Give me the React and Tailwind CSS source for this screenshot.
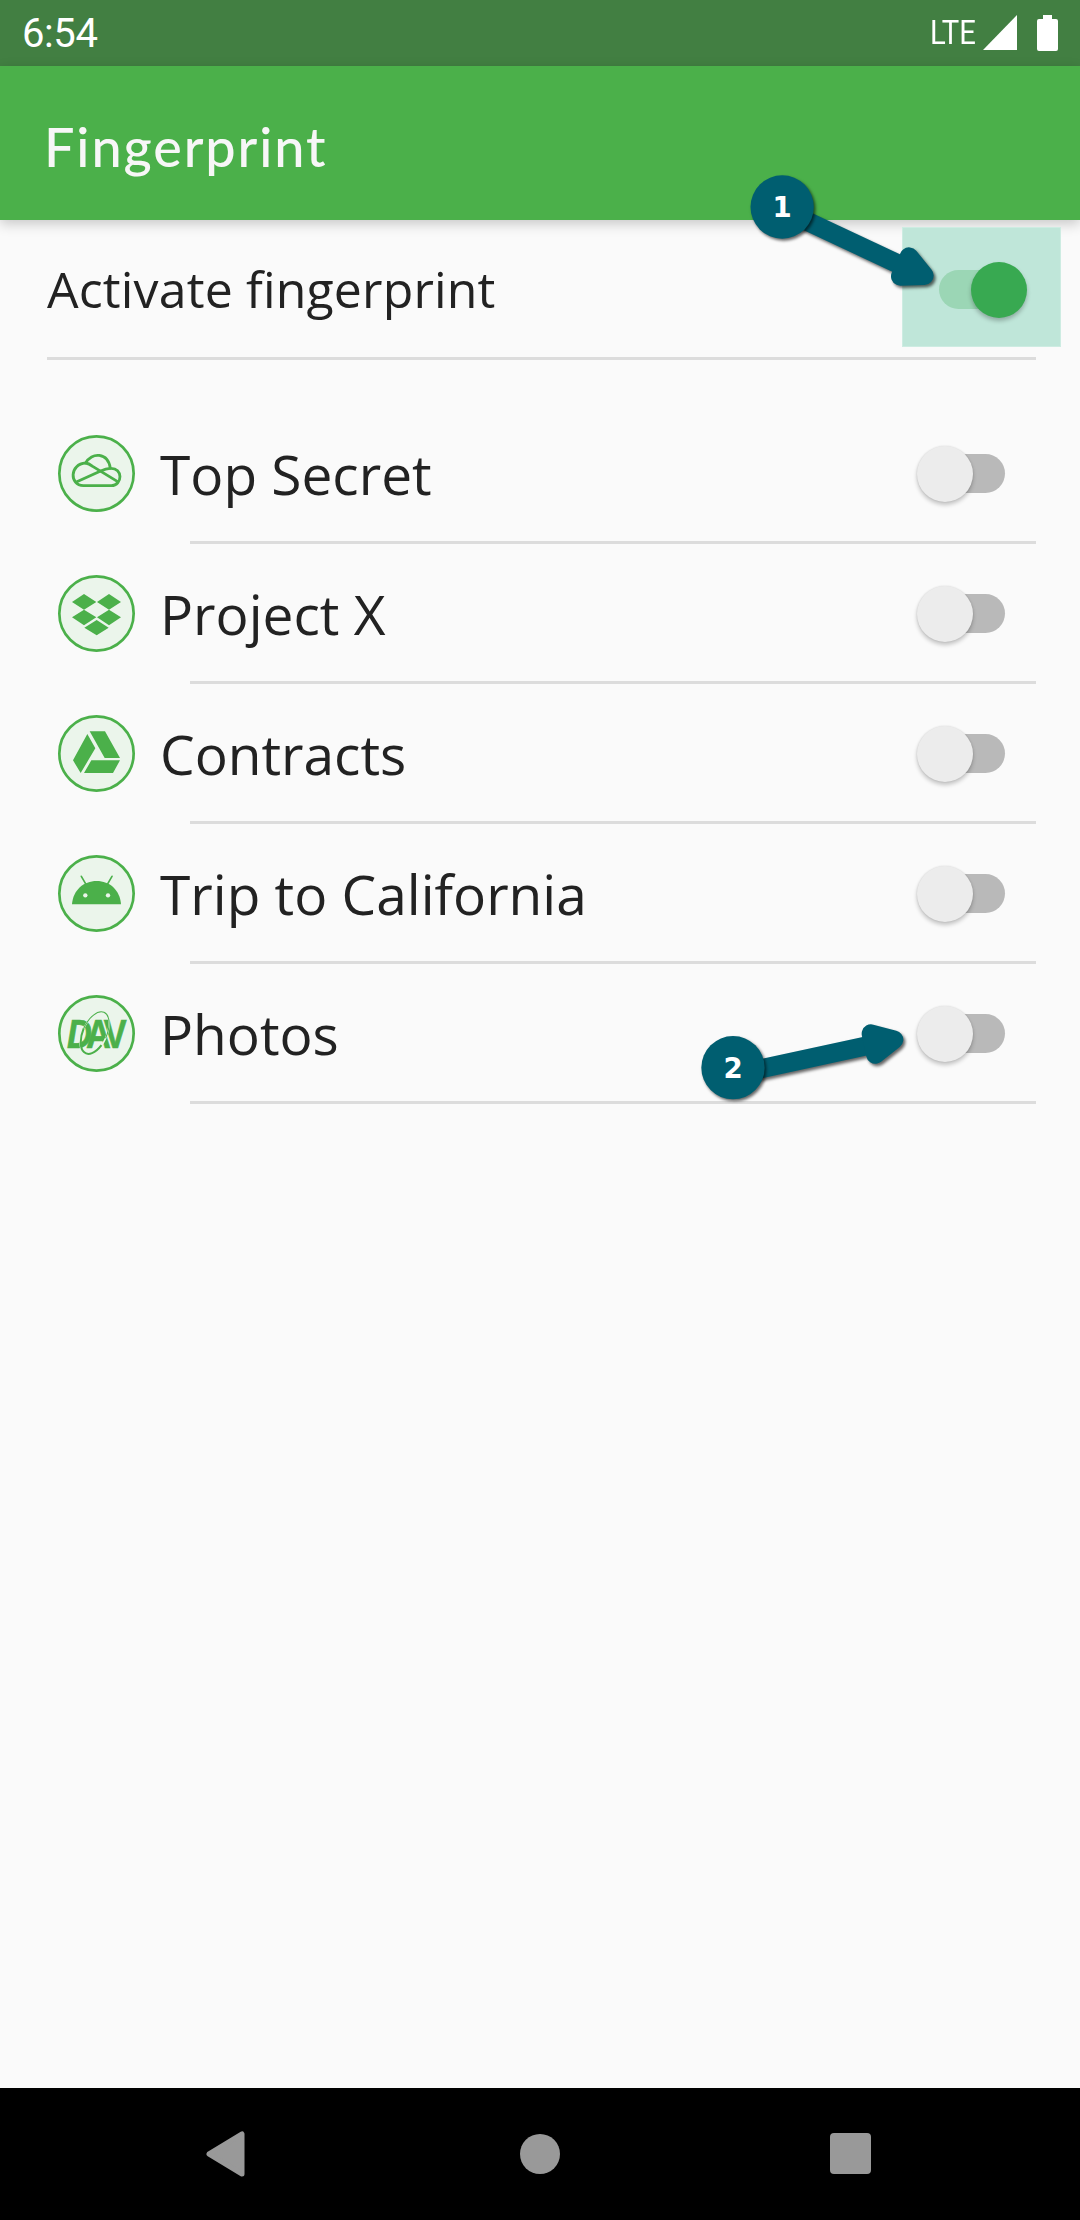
import React from "react";

const GREEN = "#4bb04a";

function CloudIcon() {
  return (
    <g fill="none" stroke={GREEN} strokeWidth="8.5" strokeLinejoin="round" strokeLinecap="round">
      <path d="M130 197C88 196 88 132 137 129C154 96 204 96 211 145C250 143 248 196 214 197Z" />
      <path d="M109 186L182 153Q198 145 211 145" />
      <path d="M137 129Q146 130 158 139L233 185" />
    </g>
  );
}

function DropboxIcon() {
  return (
    <path
      fill={GREEN}
      d="M132 102L169 126L132 149L96 126ZM207 102L243 126L207 149L171 126ZM132 149L169 172L132 196L96 172ZM207 149L243 172L207 196L171 172ZM170 180L206 203L170 226L133 203Z"
    />
  );
}

function DriveIcon() {
  return (
    <path
      fill={GREEN}
      d="M142 102L166 145L122 219L99 181ZM149 94H195L240 174H194ZM154 181H240L219 219H132Z"
    />
  );
}

function AndroidIcon() {
  return (
    <g>
      <path fill={GREEN} d="M96 193C99 150 131 123 170 123S240 150 243 193Z" />
      <path d="M124 109L138 133M216 109L202 133" stroke={GREEN} strokeWidth="5" strokeLinecap="round" />
      <circle cx="136" cy="166" r="6.5" fill="#ebf5eb" />
      <circle cx="204" cy="166" r="6.5" fill="#ebf5eb" />
    </g>
  );
}

function DavIcon() {
  return (
    <g>
      <text
        transform="translate(81 203) scale(.86 1)"
        fill={GREEN}
        stroke={GREEN}
        strokeWidth="2"
        fontFamily="Liberation Sans"
        fontWeight="700"
        fontSize="120"
      >
        <tspan fontStyle="italic">D</tspan>
        <tspan dx="-20">A</tspan>
        <tspan dx="-25">V</tspan>
      </text>
      <g fill="none" transform="rotate(24 164 160)">
        <ellipse cx="164" cy="160" rx="36" ry="69" stroke="#ebf5eb" strokeWidth="5" />
        <path d="M200 160A36 69 0 1 0 128 160" stroke={GREEN} strokeWidth="3" />
        <path d="M128 160A36 69 0 0 0 197 184" stroke={GREEN} strokeWidth="6" />
      </g>
    </g>
  );
}

const items = [
  { name: "Top Secret", Icon: CloudIcon },
  { name: "Project X", Icon: DropboxIcon },
  { name: "Contracts", Icon: DriveIcon },
  { name: "Trip to California", Icon: AndroidIcon },
  { name: "Photos", Icon: DavIcon },
];

function StatusBar() {
  return (
    <header className="flex h-[66px] justify-between bg-[#427f42] pl-[22px] pr-[22px] text-white">
      <span className="pt-[10px] font-['Roboto'] text-[40px] leading-[48px] tracking-[-0.4px]">6:54</span>
      <div className="flex items-start">
        <span className="mt-[12px] w-[53px] origin-left scale-x-[0.86] font-['Roboto'] text-[34px] leading-10">LTE</span>
        <svg className="mt-[15px] h-[35px] w-[34px]" viewBox="0 0 34 35">
          <path fill="#fff" d="M34 0V35H0Z" />
        </svg>
        <svg className="ml-5 mt-[15px] h-9 w-[21px]" viewBox="0 0 21 36">
          <path fill="#fff" d="M6 0H15V4H19Q21 4 21 6V34Q21 36 19 36H2Q0 36 0 34V6Q0 4 2 4H6Z" />
        </svg>
      </div>
    </header>
  );
}

function SwitchOff() {
  return (
    <span className="mr-[31px] flex h-[39px] w-[73px] items-center rounded-full bg-[#b9b9b9]">
      <span className="-ml-[15px] size-[56px] shrink-0 rounded-full bg-[#ececec] shadow-[0_3px_4px_rgba(0,0,0,0.22),0_0_2px_rgba(0,0,0,0.12)]" />
    </span>
  );
}

function Step({ label, className, viewBox, cx, cy, shaft, head }) {
  return (
    <svg className={className} viewBox={viewBox}>
      <g className="drop-shadow-[6px_7px_5px_rgba(0,0,0,0.6)]" fill="#005e70" stroke="#005e70" strokeLinejoin="round">
        <path d={shaft} strokeWidth="57" />
        <path d={head} strokeWidth="56" />
      </g>
      <circle className="drop-shadow-[5px_6px_5px_rgba(0,0,0,0.6)]" cx={cx} cy={cy} r="95" fill="#005e70" />
      <text x={cx} y={cy + 31} textAnchor="middle" fill="#fff" fontFamily="DejaVu Sans" fontWeight="700" fontSize="83">
        {label}
      </text>
    </svg>
  );
}

export default function App() {
  return (
    <div className="relative flex h-[2220px] w-[1080px] flex-col overflow-hidden bg-[#fafafa] font-['Open_Sans',sans-serif] text-[#222]">
      <StatusBar />
      <div className="h-[154px] bg-[#4bb04a] pl-[44px] pt-[48px] shadow-[0_4px_12px_rgba(0,0,0,0.2)]">
        <h1 className="font-['Lato',sans-serif] text-[54px] font-medium leading-[66px] tracking-[1.9px] text-[#f7f7f7]">Fingerprint</h1>
      </div>

      <main className="flex-1">
        <section className="ml-[47px] mr-[44px] flex h-[140px] items-center justify-between border-b-[3px] border-[#dcdcdc]">
          <span className="text-[50px] leading-[68px] tracking-[0.15px]">Activate fingerprint</span>
          <span className="relative z-10 -mr-[25px] mt-[-3px] flex h-[120px] w-[159px] items-center border border-[#cdece2] bg-[#bfe6d9] pl-[36px] pt-[5px]">
            <span className="flex h-[39px] w-[73px] items-center justify-end rounded-full bg-[#9bd6b5]">
              <span className="-mr-[15px] size-[56px] shrink-0 rounded-full bg-[#38a951] shadow-[0_3px_4px_rgba(0,0,0,0.25)]" />
            </span>
          </span>
        </section>

        <ul className="pt-[44px]">
          {items.map(({ name, Icon }) => (
            <li key={name} className="mr-[44px] h-[140px]">
              <div className="flex h-[137px] items-center pl-[58px] pt-[2px]">
                <span className="flex size-[77px] rounded-full bg-[#ebf5eb]">
                  <svg className="size-[77px]" viewBox="54 45 231 231">
                    <circle cx="169.5" cy="160.5" r="111.5" fill="none" stroke={GREEN} strokeWidth="8" />
                    <Icon />
                  </svg>
                </span>
                <span className="ml-[25px] flex-1 text-[55px] leading-[75px]">{name}</span>
                <SwitchOff />
              </div>
              <div className="ml-[190px] h-[3px] bg-[#dcdcdc]" />
            </li>
          ))}
        </ul>
      </main>

      <nav className="flex h-[132px] items-center bg-black pb-[1px]">
        <svg className="ml-[206px] h-[46px] w-[39px]" viewBox="0 0 39 46">
          <path d="M36 3V43L3 23Z" fill="#999" stroke="#999" strokeWidth="5" strokeLinejoin="round" />
        </svg>
        <span className="ml-[275px] size-[40px] rounded-full bg-[#999]" />
        <span className="ml-[270px] h-[41px] w-[41px] rounded-[4px] bg-[#999]" />
      </nav>

      <Step
        label="1"
        className="absolute left-[740px] top-[160px] z-20 h-[150px] w-[210px]"
        viewBox="60 480 630 450"
        cx={186.5}
        cy={621}
        shaft="M187 629L550 799"
        head="M567 770L541 829L613 827Z"
      />
      <Step
        label="2"
        className="absolute left-[690px] top-[1010px] z-20 h-[110px] w-[230px]"
        viewBox="30 90 690 330"
        cx={159}
        cy={263}
        shaft="M160 284L575 194"
        head="M573 161L586 223L642 179Z"
      />
    </div>
  );
}
